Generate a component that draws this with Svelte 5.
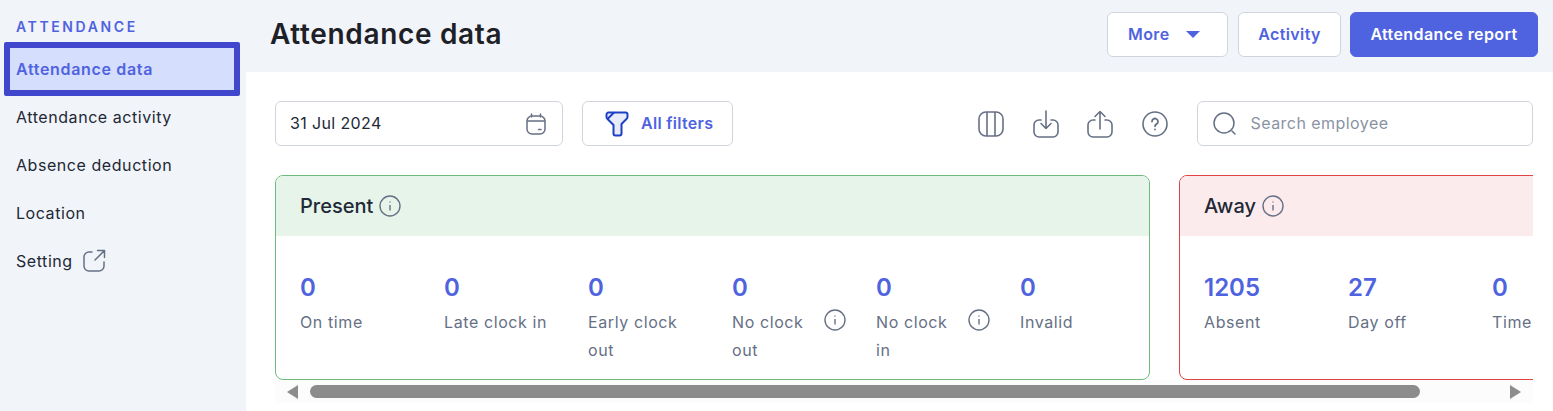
<script>
  const menu = ['Attendance activity', 'Absence deduction', 'Location'];
  const present = [
    { n: 0, label: 'On time' },
    { n: 0, label: 'Late clock in' },
    { n: 0, label: 'Early clock out' },
    { n: 0, label: 'No clock out', info: true },
    { n: 0, label: 'No clock in', info: true },
    { n: 0, label: 'Invalid' }
  ];
  const away = [
    { n: 1205, label: 'Absent' },
    { n: 27, label: 'Day off' },
    { n: 0, label: 'Time off' }
  ];
</script>

{#snippet info(cls)}
  <svg class={cls} width="22" height="22" viewBox="0 0 22 22" fill="none" stroke="#667085" stroke-width="1.4">
    <circle cx="11" cy="11" r="10" />
    <path d="M11 10v5.5M11 6.6v1" />
  </svg>
{/snippet}

{#snippet stats(items)}
  <div class="stats">
    {#each items as s}
      <div class="stat">
        <div class="num">{s.n}</div>
        <div class="lbl-row">
          <div class="lbl" class:narrow={s.info}>{s.label}</div>
          {#if s.info}{@render info('stat-info')}{/if}
        </div>
      </div>
    {/each}
  </div>
{/snippet}

<div class="page">
  <aside class="side">
    <div class="side-title">ATTENDANCE</div>
    <div class="item active">Attendance data</div>
    {#each menu as m}
      <div class="item">{m}</div>
    {/each}
    <div class="item">
      Setting
      <svg width="24" height="24" viewBox="0 0 24 24" fill="none" stroke="#667085" stroke-width="1.5" stroke-linecap="round" stroke-linejoin="round">
        <path d="M10 3H7a5 5 0 0 0-5 5v9a5 5 0 0 0 5 5h10a5 5 0 0 0 5-5v-4" />
        <path d="M13 11 22.500 1.500M15.500 1.500h7v7" />
      </svg>
    </div>
  </aside>

  <div class="right">
    <header class="top">
      <h1>Attendance data</h1>
      <div class="actions">
        <button class="btn more">More <span class="caret"></span></button>
        <button class="btn activity">Activity</button>
        <button class="btn primary">Attendance report</button>
      </div>
    </header>

    <main class="content">
      <div class="toolbar">
        <div class="date">
          <span>31 Jul 2024</span>
          <svg width="20" height="22" viewBox="0 0 20 22" fill="none" stroke="#667085" stroke-width="1.5" stroke-linecap="round">
            <rect x="1" y="3" width="18" height="18" rx="5" />
            <path d="M5.500 1v3M14.500 1v3M1.500 8h17M12.500 16.500h2.500" />
          </svg>
        </div>
        <button class="filters">
          <svg width="24" height="26" viewBox="0 0 24 26" fill="#e8ebf9" stroke="#1c40c4" stroke-width="2" stroke-linejoin="round">
            <path d="M3.500 1.500h17a2 2 0 0 1 2 2v2.500a3 3 0 0 1-1 2L16.500 13v9.500a2 2 0 0 1-2 2h-4a2 2 0 0 1-2-2V14L2.500 8a3 3 0 0 1-1-2V3.500a2 2 0 0 1 2-2z" />
            <path d="M9 1.500 2.500 8" fill="none" />
          </svg>
          All filters
        </button>
        <div class="tools">
          <svg width="26" height="26" viewBox="0 0 26 26" fill="none" stroke="#667085" stroke-width="1.6">
            <rect x="1" y="1" width="24" height="24" rx="7" />
            <path d="M9 1v24M17 1v24" />
          </svg>
          <svg width="26" height="28" viewBox="0 0 26 28" fill="none" stroke="#667085" stroke-width="1.6" stroke-linecap="round" stroke-linejoin="round">
            <path d="M8 10H6a5 5 0 0 0-5 5v7a5 5 0 0 0 5 5h14a5 5 0 0 0 5-5v-7a5 5 0 0 0-5-5h-2" />
            <path d="M13 1v17M8 13.500l5 5 5-5" />
          </svg>
          <svg width="26" height="28" viewBox="0 0 26 28" fill="none" stroke="#667085" stroke-width="1.6" stroke-linecap="round" stroke-linejoin="round">
            <path d="M8 10H6a5 5 0 0 0-5 5v7a5 5 0 0 0 5 5h14a5 5 0 0 0 5-5v-7a5 5 0 0 0-5-5h-2" />
            <path d="M13 19V1.500M8 6.500l5-5 5 5" />
          </svg>
          <svg width="26" height="26" viewBox="0 0 26 26" fill="none" stroke="#667085" stroke-width="1.6" stroke-linecap="round">
            <circle cx="13" cy="13" r="12" />
            <path d="M10 10.500a3 3 0 1 1 4.500 2.600c-1 .6-1.500 1-1.500 2.200M13 18.300v.2" stroke-width="1.800" />
          </svg>
        </div>
        <div class="search">
          <svg width="26" height="26" viewBox="0 0 26 26" fill="none" stroke="#667085" stroke-width="1.5" stroke-linecap="round">
            <circle cx="12" cy="12" r="10" />
            <path d="M20 20l3 3" />
          </svg>
          <span>Search employee</span>
        </div>
      </div>

      <div class="cards">
        <section class="card green">
          <div class="card-head">Present {@render info('head-info')}</div>
          {@render stats(present)}
        </section>
        <section class="card red">
          <div class="card-head">Away {@render info('head-info')}</div>
          {@render stats(away)}
        </section>
      </div>

      <div class="scrollbar">
        <span class="arrow left"></span>
        <div class="thumb"></div>
        <span class="arrow rgt"></span>
      </div>
    </main>
  </div>
</div>

<style>
  :global(body) {
    margin: 0;
    font-family: Inter, "Noto Sans", sans-serif;
    background: #fff;
  }

  .page {
    display: flex;
    width: 1553px;
    height: 411px;
    overflow: hidden;
    background: #f1f4f9;
  }

  .side {
    width: 246px;
    flex: none;
    padding-top: 18px;
    box-sizing: border-box;
  }
  .side-title {
    margin-left: 16px;
    height: 24px;
    font-size: 14px;
    line-height: 18px;
    font-weight: 600;
    letter-spacing: 2.6px;
    color: #4f63e0;
  }
  .item {
    display: flex;
    align-items: center;
    gap: 9px;
    height: 48px;
    padding-left: 16px;
    font-size: 16px;
    letter-spacing: 0.56px;
    color: #212936;
  }
  .item.active {
    width: 236px;
    height: 54px;
    margin: 0 0 -3px 4px;
    padding-left: 6px;
    box-sizing: border-box;
    border: 6px solid #4147cc;
    border-radius: 2px;
    background: #d5defd;
    color: #4f63e0;
    font-weight: 600;
    letter-spacing: 0.67px;
  }

  .right {
    flex: 1;
    min-width: 0;
    display: flex;
    flex-direction: column;
  }
  .top {
    flex: none;
    height: 72px;
    display: flex;
    justify-content: space-between;
    padding: 12px 15px 0 24px;
    box-sizing: border-box;
  }
  h1 {
    margin: 0;
    font-size: 28px;
    line-height: 44px;
    font-weight: 600;
    letter-spacing: 0.67px;
    color: #1d2026;
  }
  .actions {
    display: flex;
    gap: 10px;
  }
  .btn {
    height: 45px;
    border: 1px solid #d0d5dd;
    border-radius: 6px;
    background: #fff;
    font-family: inherit;
    font-size: 16px;
    font-weight: 600;
    letter-spacing: 0.4px;
    line-height: 41px;
    color: #4f63e0;
    padding: 0 0 1px;
  }
  .more {
    width: 121px;
    display: flex;
    align-items: center;
    padding-left: 20px;
    gap: 16px;
    box-sizing: border-box;
  }
  .caret {
    margin-top: 1px;
    border-left: 7px solid transparent;
    border-right: 7px solid transparent;
    border-top: 7px solid #4f63e0;
  }
  .activity {
    width: 103px;
  }
  .primary {
    width: 188px;
    margin-left: -1px;
    background: #4f63e0;
    border-color: #4f63e0;
    color: #fff;
  }

  .content {
    flex: 1;
    background: #fff;
    padding: 29px 20px 0 29px;
    min-height: 0;
  }
  .toolbar {
    display: flex;
    align-items: center;
    height: 45px;
  }
  .date {
    width: 288px;
    height: 45px;
    box-sizing: border-box;
    border: 1px solid #d0d5dd;
    border-radius: 6px;
    display: flex;
    align-items: center;
    justify-content: space-between;
    padding: 0 16px 0 14px;
    font-size: 16px;
    letter-spacing: 0.37px;
    color: #212936;
  }
  .date span {
    margin-top: -2px;
  }
  .filters {
    width: 151px;
    height: 45px;
    margin-left: 19px;
    box-sizing: border-box;
    border: 1px solid #d0d5dd;
    border-radius: 6px;
    background: #fff;
    display: flex;
    align-items: center;
    gap: 12px;
    padding: 0 0 2px 22px;
    font-family: inherit;
    font-size: 16px;
    font-weight: 600;
    letter-spacing: 0.3px;
    color: #4f63e0;
  }
  .filters svg {
    margin-top: 2px;
  }
  .tools {
    display: flex;
    align-items: center;
    gap: 28.500px;
    margin-left: 245px;
  }
  .search {
    width: 336px;
    height: 45px;
    margin-left: 29px;
    box-sizing: border-box;
    border: 1px solid #d0d5dd;
    border-radius: 6px;
    display: flex;
    align-items: center;
    gap: 13px;
    padding-left: 14px;
    font-size: 16px;
    letter-spacing: 0.45px;
    color: #8a93a3;
  }
  .search span {
    margin-top: -2px;
  }

  .cards {
    display: flex;
    gap: 29px;
    margin-top: 29px;
    width: 1258px;
    overflow: hidden;
    height: 205px;
  }
  .card {
    flex: none;
    width: 875px;
    height: 205px;
    box-sizing: border-box;
    border: 1px solid;
    border-radius: 8px;
    background: #fff;
    overflow: hidden;
  }
  .green {
    border-color: #6dbb7a;
  }
  .red {
    border-color: #e04343;
  }
  .card-head {
    height: 60px;
    display: flex;
    align-items: center;
    gap: 6px;
    padding-left: 24px;
    font-size: 20px;
    font-weight: 500;
    color: #212936;
  }
  .green .card-head {
    background: #e7f4ea;
  }
  .red .card-head {
    background: #fcebec;
  }
  .head-info {
    flex: none;
  }
  .stats {
    display: flex;
    padding: 36px 0 0 24px;
  }
  .stat {
    width: 144px;
    flex: none;
  }
  .num {
    font-size: 24px;
    line-height: 32px;
    font-weight: 600;
    color: #4f63e0;
  }
  .lbl-row {
    display: flex;
    margin-top: 4px;
    gap: 12px;
  }
  .lbl {
    width: 112px;
    font-size: 16px;
    line-height: 28px;
    letter-spacing: 0.6px;
    color: #667085;
  }
  .lbl.narrow {
    width: 80px;
  }
  .stat-info {
    flex: none;
    margin-top: 1px;
  }

  .scrollbar {
    display: flex;
    align-items: center;
    width: 1258px;
    height: 23px;
    background: #fcfcfc;
  }
  .arrow {
    width: 0;
    height: 0;
    border-top: 7px solid transparent;
    border-bottom: 7px solid transparent;
  }
  .arrow.left {
    margin-left: 12px;
    border-right: 11px solid #8c8c8c;
  }
  .arrow.rgt {
    margin-left: 90px;
    border-left: 11px solid #8c8c8c;
  }
  .thumb {
    width: 1110px;
    height: 13px;
    margin-left: 12px;
    border-radius: 7px;
    background: #8c8c8c;
  }
</style>
